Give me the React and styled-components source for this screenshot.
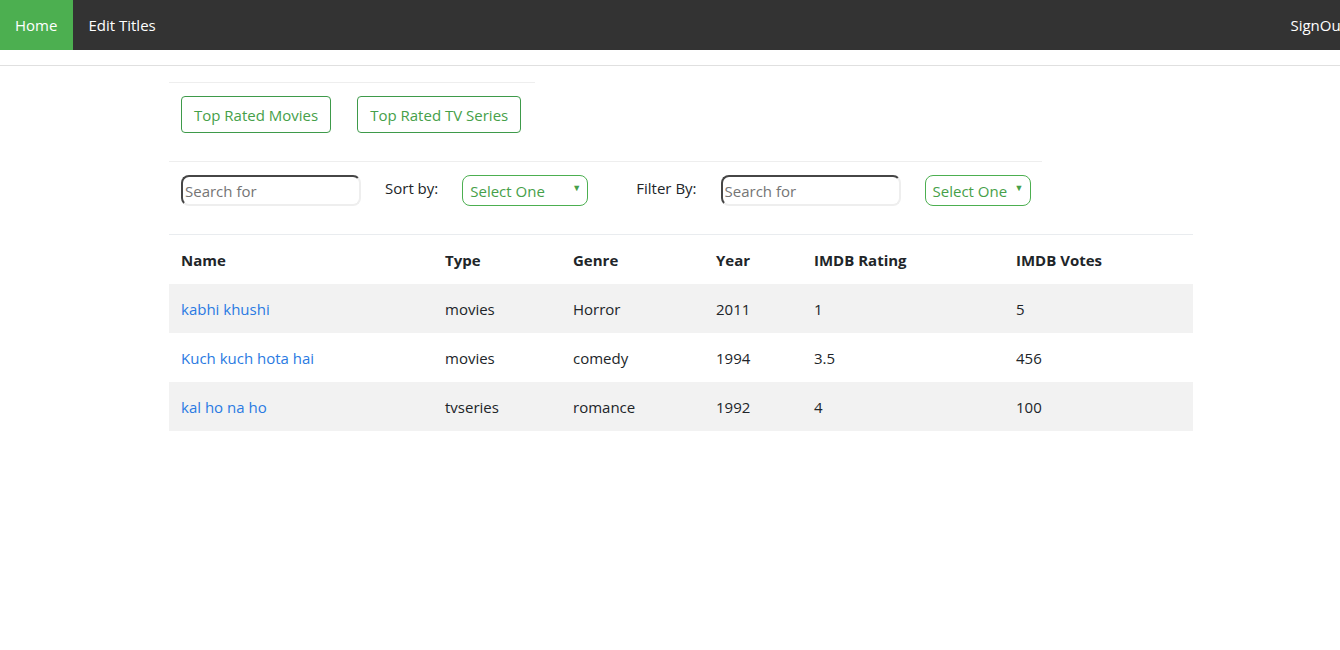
import React from 'react';
import styled, { createGlobalStyle } from 'styled-components';

const GlobalStyle = createGlobalStyle`
  html, body {
    margin: 0;
    padding: 0;
    overflow: hidden;
    background: #fff;
    font-family: "Open Sans", "Noto Sans", sans-serif;
    color: #212529;
  }
`;

const NavBar = styled.ul`
  display: flex;
  list-style: none;
  margin: 0;
  padding: 0;
  height: 50px;
  background: #333333;
  overflow: hidden;
`;

const NavItem = styled.li`
  display: flex;
  align-items: center;
  padding: 0 16px 0 15px;
  font-size: 15px;
  color: #ffffff;
  background: ${(p) => (p.active ? '#4caf50' : 'transparent')};
  margin-left: ${(p) => (p.right ? 'auto' : '0')};
  margin-right: ${(p) => (p.right ? '-22px' : '0')};
  cursor: pointer;
`;

const Rule = styled.hr`
  border: 0;
  border-top: 1px solid ${(p) => p.color || '#eeeeee'};
  margin: ${(p) => p.margin || '0'};
  width: ${(p) => p.width || '100%'};
`;

const Main = styled.div`
  width: 1024px;
  margin-left: 169px;
`;

const ButtonRow = styled.div`
  display: flex;
  gap: 26px;
  padding: 13px 12px 28px;
`;

const GreenButton = styled.button`
  height: 37px;
  padding: 0 12px;
  border: 1px solid #3e9a4a;
  border-radius: 4px;
  background: #fff;
  color: #46a049;
  font-family: inherit;
  font-size: 15px;
  cursor: pointer;
`;

const ToolRow = styled.div`
  display: flex;
  align-items: center;
  padding: 13px 12px 28px;
`;

const SearchInput = styled.input`
  box-sizing: border-box;
  width: 180px;
  height: 31px;
  padding: 0 2px;
  border: 2px inset #eeeeee;
  border-top-color: #9a9a9a;
  border-left-color: #9a9a9a;
  border-radius: 8px;
  font-family: inherit;
  font-size: 15px;
  color: #333;
  margin-right: ${(p) => p.gap || 0}px;
  &::placeholder {
    color: #757575;
  }
`;

const Label = styled.span`
  font-size: 15px;
  color: #212529;
  margin-right: ${(p) => p.gap || 0}px;
  margin-top: -5px;
`;

const SelectBox = styled.div`
  box-sizing: border-box;
  display: flex;
  align-items: center;
  justify-content: space-between;
  width: ${(p) => p.w}px;
  height: 31px;
  padding: 0 6px 0 7px;
  border: 1px solid #4caf50;
  border-radius: 8px;
  color: #46a049;
  font-size: 15px;
  margin-right: ${(p) => p.gap || 0}px;
`;

const Caret = styled.span`
  font-size: 9px;
  margin-top: -6px;
  color: #46a049;
`;

const Table = styled.table`
  width: 1024px;
  border-collapse: collapse;
  table-layout: fixed;
  border-top: 1px solid #e9ecef;
`;

const Th = styled.th`
  text-align: left;
  font-weight: 700;
  font-size: 15px;
  height: 49px;
  padding: 0 12px;
  color: #212529;
`;

const Row = styled.tr`
  background: ${(p) => (p.striped ? '#f2f2f2' : '#fff')};
`;

const Td = styled.td`
  height: 49px;
  padding: 0 12px;
  font-size: 15px;
  color: #212529;
`;

const TitleLink = styled.a`
  color: #2a7ae2;
  text-decoration: none;
`;

const titles = [
  { name: 'kabhi khushi', type: 'movies', genre: 'Horror', year: 2011, rating: '1', votes: '5' },
  { name: 'Kuch kuch hota hai', type: 'movies', genre: 'comedy', year: 1994, rating: '3.5', votes: '456' },
  { name: 'kal ho na ho', type: 'tvseries', genre: 'romance', year: 1992, rating: '4', votes: '100' },
];

const App = () => {
  return (
    <>
      <GlobalStyle />
      <NavBar>
        <NavItem active>Home</NavItem>
        <NavItem>Edit Titles</NavItem>
        <NavItem right>SignOut</NavItem>
      </NavBar>
      <Rule color="#e0e0e0" margin="15px 0 0" />
      <Main>
        <Rule color="#eeeeee" margin="16px 0 0" width="366px" />
        <ButtonRow>
          <GreenButton>Top Rated Movies</GreenButton>
          <GreenButton>Top Rated TV Series</GreenButton>
        </ButtonRow>
        <Rule color="#eeeeee" width="873px" />
        <ToolRow>
          <SearchInput placeholder="Search for" gap={24} />
          <Label gap={24}>Sort by:</Label>
          <SelectBox w={126} gap={48}>
            Select One <Caret>▼</Caret>
          </SelectBox>
          <Label gap={24}>Filter By:</Label>
          <SearchInput placeholder="Search for" gap={24} />
          <SelectBox w={106}>
            Select One <Caret>▼</Caret>
          </SelectBox>
        </ToolRow>
        <Table>
          <colgroup>
            <col style={{ width: 264 }} />
            <col style={{ width: 128 }} />
            <col style={{ width: 143 }} />
            <col style={{ width: 98 }} />
            <col style={{ width: 202 }} />
            <col style={{ width: 189 }} />
          </colgroup>
          <thead>
            <tr>
              <Th>Name</Th>
              <Th>Type</Th>
              <Th>Genre</Th>
              <Th>Year</Th>
              <Th>IMDB Rating</Th>
              <Th>IMDB Votes</Th>
            </tr>
          </thead>
          <tbody>
            {titles.map((t, i) => (
              <Row key={t.name} striped={i % 2 === 0}>
                <Td><TitleLink href="#">{t.name}</TitleLink></Td>
                <Td>{t.type}</Td>
                <Td>{t.genre}</Td>
                <Td>{t.year}</Td>
                <Td>{t.rating}</Td>
                <Td>{t.votes}</Td>
              </Row>
            ))}
          </tbody>
        </Table>
      </Main>
    </>
  );
};

export default App;
